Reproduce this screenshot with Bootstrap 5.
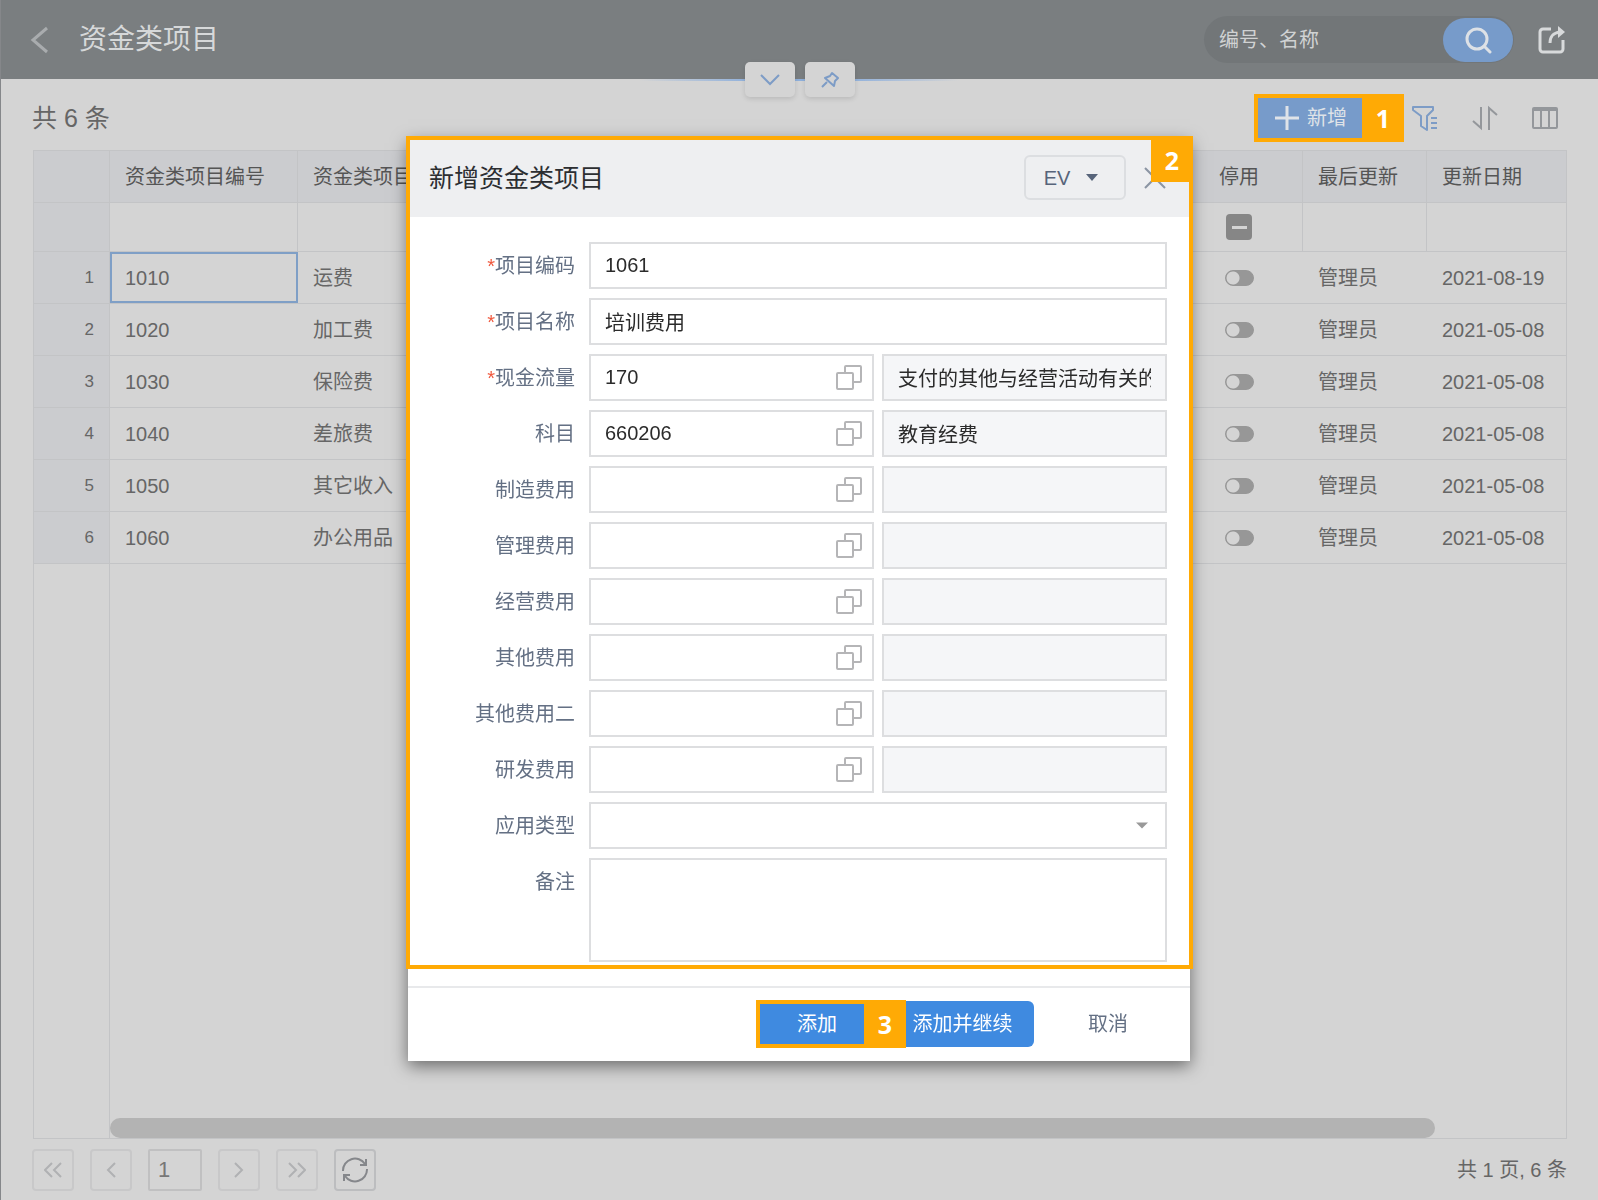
<!DOCTYPE html>
<html lang="zh-CN">
<head>
<meta charset="utf-8">
<meta name="viewport" content="width=device-width, initial-scale=1">
<title>资金类项目</title>
<link href="https://cdn.jsdelivr.net/npm/bootstrap@5.3.0/dist/css/bootstrap.min.css" rel="stylesheet">
<style>
  :root { --line: #c3c4c6; --mark: #ffaa05; --blue: #3f8ae0; --blue-dim: #779bca; }
  body { font-family: "Liberation Sans", "Noto Sans CJK SC", sans-serif; font-size: 20px; line-height: 28px; color: #666; background: #d4d4d4; }
  svg { display: block; }
  .shell { border-left: 1px solid #85878a; }
  .topbar { height: 79px; background: #7a7e80; padding: 0 32px 0 28px; color: #d6d8d9; }
  .topbar h1 { font-size: 28px; line-height: 40px; font-weight: 400; }
  .searchbox { background: #727678; border-radius: 24px; height: 47px; width: 310px; padding: 1px; }
  .searchbox input { color: #d0d2d3; font-size: 20px; padding: 0 0 0 14px; background: transparent; min-width: 0; }
  .searchbox input::placeholder { color: #d0d2d3; opacity: 1; }
  .searchbox input:focus { background: transparent; box-shadow: none; }
  .searchbox .btn { background: var(--blue-dim); width: 70px; height: 44px; border-radius: 22px; }
  .tabs-pull { top: 62px; left: 0; right: 0; gap: 10px; }
  .tabs-pull .btn { width: 50px; height: 35px; border-radius: 5px; background: #d4d4d4; color: #7d9cc6; box-shadow: 0 2px 5px rgba(0,0,0,.12); }
  .glow { top: 79px; left: 40%; right: 40%; height: 2px; background: linear-gradient(90deg, transparent, #8fb0dc 35%, #8fb0dc 65%, transparent); }
  .toolbar { height: 71px; padding: 6px 40px 0 31px; }
  .total { font-size: 25px; }
  .tool-set { gap: 34px; }
  .toolbar .tool { color: #94979b; width: 26px; height: 26px; }
  .toolbar .tool.on { color: #7d9cc6; }
  .add-btn { background: var(--blue-dim); color: #dfe3e8; height: 46px; width: 148px; padding: 0 0 0 19px; border-radius: 4px; font-size: 20px; }
  .grid-wrap { margin: 0 31px 0 32px; border: 1px solid var(--line); }
  .grid { table-layout: fixed; width: 100%; border-collapse: separate; border-spacing: 0; }
  .grid th, .grid td { height: 52px; padding: 0 15px; border-bottom: 1px solid var(--line); font-weight: 400; white-space: nowrap; overflow: hidden; }
  .grid thead th { background: #cbcccf; color: #555; border-right: 1px solid var(--line); }
  .grid .filters td { height: 49px; border-right: 1px solid var(--line); }
  .grid thead th:last-child, .grid .filters td:last-child { border-right: 0; }
  .grid .num { background: #cbcccf; font-size: 17px; text-align: right; border-right: 1px solid var(--line); }
  .grid .picked { box-shadow: inset 0 0 0 2px #7f9fc6; }
  .gutter { width: 76px; border-right: 1px solid var(--line); }
  .hbar { width: 91%; height: 20px; border-radius: 10px; background: #b3b3b3; }
  .minus { appearance: none; width: 26px; height: 26px; border-radius: 4px; background: #868686 linear-gradient(#d4d4d4, #d4d4d4) center / 15px 3px no-repeat; margin: 0; display: block; }
  .flip { appearance: none; width: 29px; height: 16px; border-radius: 8px; border: 1px solid #979797; background: radial-gradient(circle at 7px 7px, #d4d4d4 6px, #979797 7px); display: block; margin: 0; }
  .pager { padding: 10px 31px 9px 31px; gap: 16px; }
  .pager .btn, .pager input { width: 42px; height: 42px; border: 2px solid #c8c8c9; border-radius: 4px; padding: 0; color: #b0b1b3; background: transparent; }
  .pager input { width: 54px; padding: 0 8px; color: #777; border-color: #c0c0c1; border-radius: 2px; font-size: 22px; }
  .pager .refresh { color: #85878b; border-color: #bcbdbf; }

  .tag-frame { border: 4px solid var(--mark); pointer-events: none; z-index: 5; }
  .tag-no { position: absolute; background: var(--mark); color: #fff; font: 700 25px/48px "Noto Sans", "Noto Sans CJK SC", sans-serif; width: 42px; text-align: center; }
  .add-frame { inset: -1px 0 -1px -2px; border-right-width: 0; }
  .tag-side { top: -4px; right: 0; bottom: -4px; }
  .dlg-frame { inset: -2px -3px auto -2px; height: 833px; }
  .dlg-frame .tag-no { top: -4px; right: -4px; height: 46px; }

  .dlg { max-width: 782px; margin: 138px auto 0; }
  .dlg .modal-content { border: 0; border-radius: 0; box-shadow: 0 5px 16px rgba(0,0,0,.5); }
  .dlg .modal-header { height: 79px; background: #eeeff1; border: 0; border-radius: 0; padding: 0 24px 0 21px; }
  .dlg .modal-title { font-size: 25px; line-height: 36px; font-weight: 400; color: #2c2e31; }
  .dlg .head-tools { gap: 18px; }
  .ev-btn { width: 102px; height: 45px; border: 2px solid #dcdee1; border-radius: 6px; color: #57647a; font-size: 20px; padding: 0 8px 0 0; }
  .close-x { color: #8b95a3; padding: 0; width: 22px; height: 22px; border: 0; }
  .dlg .modal-body { padding: 25px 23px 24px 24px; display: grid; gap: 9px; }
  .line-item { display: grid; grid-template-columns: 143px minmax(0, 1fr); column-gap: 14px; }
  .line-item label { text-align: right; height: 47px; line-height: 49px; color: #647084; white-space: nowrap; }
  .line-item label b { color: #f0593e; font-weight: 400; }
  .box { height: 47px; width: 100%; border: 2px solid #dddee0; border-radius: 0; padding: 0 14px; font-size: 20px; color: #2b2b2b; background-color: #fff; }
  .box[readonly] { background-color: #f5f6f8; }
  .box.has-pick { padding-right: 48px; }
  select.box { appearance: none; background: #fff url("data:image/svg+xml,%3Csvg xmlns='http://www.w3.org/2000/svg' viewBox='0 0 12 6'%3E%3Cpath fill='%23999' d='M0 0h12L6 6z'/%3E%3C/svg%3E") right 17px center / 12px 7px no-repeat; }
  textarea.box { height: 104px; resize: none; display: block; }
  .pair { display: grid; grid-template-columns: 1fr 1fr; column-gap: 8px; }
  .pick { right: 11px; top: 10px; width: 28px; height: 27px; padding: 0; border: 0; color: #b5b5b7; }
  .dlg .modal-footer { height: 75px; padding: 0 24px 1px; gap: 16px; border-top: 2px solid #e8e9eb; flex-wrap: nowrap; }
  .dlg .modal-footer > * { margin: 0; }
  .act { width: 116px; height: 46px; border-radius: 6px; border: 0; font-size: 20px; padding: 0; color: #647084; }
  .act.go { background: var(--blue); color: #fff; }
  .act.wide { width: 143px; }
  .send-frame { inset: -1px -31px -1px -3px; border-right-width: 0; }
</style>
<script src="https://cdn.jsdelivr.net/npm/bootstrap@5.3.0/dist/js/bootstrap.bundle.min.js"></script>
</head>
<body>
<div class="shell min-vh-100 d-flex flex-column position-relative">
  <header class="topbar d-flex align-items-center">
    <a href="#" class="text-reset me-4" aria-label="返回"><svg width="22" height="28" viewBox="0 0 22 28" fill="none" stroke="#a9acae" stroke-width="3"><path d="M18 2 4 14l14 12"/></svg></a>
    <h1 class="m-0 ms-1">资金类项目</h1>
    <form class="searchbox d-flex align-items-center ms-auto me-4">
      <input class="form-control border-0" type="text" placeholder="编号、名称" aria-label="编号、名称">
      <button class="btn p-0 d-flex align-items-center justify-content-center flex-shrink-0" type="button" aria-label="搜索"><svg width="28" height="28" viewBox="0 0 28 28" fill="none" stroke="#dde1e6" stroke-width="3"><circle cx="13" cy="13" r="10"/><path d="m20 20 6 6" stroke-linecap="round"/></svg></button>
    </form>
    <a href="#" class="text-reset" aria-label="分享"><svg width="28" height="28" viewBox="0 0 28 28" fill="none" stroke="#d8dadb" stroke-width="3"><path d="M13 3H5a3 3 0 0 0-3 3v17a3 3 0 0 0 3 3h17a3 3 0 0 0 3-3v-9"/><path d="M12 17c0-7 3-10 10-11"/><path d="m20 0 7 6-7 6z" fill="#d8dadb" stroke="none"/></svg></a>
  </header>
  <div class="glow position-absolute"></div>
  <div class="tabs-pull position-absolute d-flex justify-content-center">
    <button class="btn border-0 p-0 d-flex align-items-center justify-content-center" type="button" aria-label="展开"><svg width="20" height="12" viewBox="0 0 20 12" fill="none" stroke="currentColor" stroke-width="2"><path d="m1 1 9 9 9-9"/></svg></button>
    <button class="btn border-0 p-0 d-flex align-items-center justify-content-center" type="button" aria-label="固定"><svg width="18" height="18" viewBox="0 0 18 18" fill="none" stroke="currentColor" stroke-width="2" stroke-linejoin="round"><path d="m11 2 6 5-3 3-1 5-9-8 5-2zM6 11l-5 5"/></svg></button>
  </div>

  <div class="toolbar d-flex align-items-center">
    <span class="total">共 6 条</span>
    <div class="ms-auto me-2 position-relative">
      <button class="btn add-btn border-0 d-flex align-items-center gap-2" type="button"><svg width="24" height="24" viewBox="0 0 24 24" stroke="currentColor" stroke-width="3"><path d="M12 0v24M0 12h24"/></svg>新增</button>
      <span class="tag-frame add-frame position-absolute"><span class="tag-no tag-side">1</span></span>
    </div>
    <div class="tool-set d-flex">
      <button class="btn tool on p-0 border-0" type="button" aria-label="筛选"><svg width="26" height="26" viewBox="0 0 26 26" fill="none" stroke="currentColor" stroke-width="2" stroke-linejoin="round"><path d="M1 2h20v3l-6 6v14l-6-4V11L1 5zM19 13h6M19 18h6M19 23h6"/></svg></button>
      <button class="btn tool p-0 border-0" type="button" aria-label="排序"><svg width="26" height="26" viewBox="0 0 26 26" fill="none" stroke="currentColor" stroke-width="2"><path d="M9 2v21l-8-7M17 25V3l8 7"/></svg></button>
      <button class="btn tool p-0 border-0" type="button" aria-label="列设置"><svg width="26" height="26" viewBox="0 0 26 26" fill="none" stroke="currentColor" stroke-width="2"><rect x="1" y="3" width="24" height="20" rx="1"/><path d="M2 5h22M9 3v20M17 3v20"/></svg></button>
    </div>
  </div>

  <main class="grid-wrap flex-grow-1 d-flex flex-column">
    <table class="grid">
      <colgroup><col style="width:76px"><col style="width:188px"><col><col style="width:127px"><col style="width:124px"><col style="width:139px"></colgroup>
      <thead>
        <tr><th></th><th>资金类项目编号</th><th>资金类项目</th><th class="text-center">停用</th><th>最后更新</th><th>更新日期</th></tr>
      </thead>
      <tbody>
        <tr class="filters"><td class="num"></td><td></td><td></td><td><input type="checkbox" class="minus mx-auto" aria-label="停用筛选"></td><td></td><td></td></tr>
        <tr><td class="num">1</td><td class="picked">1010</td><td>运费</td><td><input type="checkbox" class="flip mx-auto" aria-label="停用 1010"></td><td>管理员</td><td>2021-08-19</td></tr>
        <tr><td class="num">2</td><td>1020</td><td>加工费</td><td><input type="checkbox" class="flip mx-auto" aria-label="停用 1020"></td><td>管理员</td><td>2021-05-08</td></tr>
        <tr><td class="num">3</td><td>1030</td><td>保险费</td><td><input type="checkbox" class="flip mx-auto" aria-label="停用 1030"></td><td>管理员</td><td>2021-05-08</td></tr>
        <tr><td class="num">4</td><td>1040</td><td>差旅费</td><td><input type="checkbox" class="flip mx-auto" aria-label="停用 1040"></td><td>管理员</td><td>2021-05-08</td></tr>
        <tr><td class="num">5</td><td>1050</td><td>其它收入</td><td><input type="checkbox" class="flip mx-auto" aria-label="停用 1050"></td><td>管理员</td><td>2021-05-08</td></tr>
        <tr><td class="num">6</td><td>1060</td><td>办公用品</td><td><input type="checkbox" class="flip mx-auto" aria-label="停用 1060"></td><td>管理员</td><td>2021-05-08</td></tr>
      </tbody>
    </table>
    <div class="flex-grow-1 d-flex">
      <div class="gutter flex-shrink-0"></div>
      <div class="flex-grow-1 d-flex align-items-end"><div class="hbar"></div></div>
    </div>
  </main>

  <footer class="pager d-flex align-items-center">
    <button class="btn d-flex align-items-center justify-content-center" type="button" aria-label="首页"><svg width="18" height="16" viewBox="0 0 18 16" fill="none" stroke="currentColor" stroke-width="2"><path d="M8 1 1 8l7 7M17 1l-7 7 7 7"/></svg></button>
    <button class="btn d-flex align-items-center justify-content-center" type="button" aria-label="上一页"><svg width="10" height="16" viewBox="0 0 10 16" fill="none" stroke="currentColor" stroke-width="2"><path d="M9 1 2 8l7 7"/></svg></button>
    <input type="text" value="1" aria-label="页码">
    <button class="btn d-flex align-items-center justify-content-center" type="button" aria-label="下一页"><svg width="10" height="16" viewBox="0 0 10 16" fill="none" stroke="currentColor" stroke-width="2"><path d="m1 1 7 7-7 7"/></svg></button>
    <button class="btn d-flex align-items-center justify-content-center" type="button" aria-label="末页"><svg width="18" height="16" viewBox="0 0 18 16" fill="none" stroke="currentColor" stroke-width="2"><path d="m1 1 7 7-7 7M10 1l7 7-7 7"/></svg></button>
    <button class="btn refresh d-flex align-items-center justify-content-center" type="button" aria-label="刷新"><svg width="28" height="26" viewBox="0 0 28 26" fill="none" stroke="currentColor" stroke-width="2"><path d="M2 14A12 12 0 0 1 24 7M26 12A12 12 0 0 1 4 19"/><path d="M25 2v6h-6M3 24v-6h6"/></svg></button>
    <span class="ms-auto">共 1 页, 6 条</span>
  </footer>
</div>

<div class="modal d-block" tabindex="-1" role="dialog" aria-labelledby="dlgTitle">
  <div class="modal-dialog dlg">
    <div class="modal-content">
      <span class="tag-frame dlg-frame position-absolute"><span class="tag-no">2</span></span>
      <div class="modal-header">
        <h2 class="modal-title" id="dlgTitle">新增资金类项目</h2>
        <div class="head-tools d-flex align-items-center">
          <button class="btn ev-btn d-flex align-items-center justify-content-center gap-3" type="button">EV<svg width="12" height="7" viewBox="0 0 12 7"><path d="M0 0h12L6 7z" fill="#57647a"/></svg></button>
          <button class="btn close-x" type="button" aria-label="关闭"><svg width="22" height="22" viewBox="0 0 22 22" stroke="currentColor" stroke-width="2"><path d="m1 1 20 20M21 1 1 21"/></svg></button>
        </div>
      </div>
      <form class="modal-body" id="rows">
        <div class="line-item"><label for="f1"><b>*</b>项目编码</label><input class="box" id="f1" value="1061"></div>
        <div class="line-item"><label for="f2"><b>*</b>项目名称</label><input class="box" id="f2" value="培训费用"></div>
        <div class="line-item"><label for="f3"><b>*</b>现金流量</label><div class="pair"><div class="position-relative"><input class="box has-pick" id="f3" value="170"><button class="btn pick position-absolute" type="button" aria-label="选择"><svg width="28" height="27" viewBox="0 0 28 27" fill="none" stroke="currentColor" stroke-width="2"><rect x="2" y="9" width="16" height="16" rx="1"/><path d="M10 9V3a1 1 0 0 1 1-1h14a1 1 0 0 1 1 1v14a1 1 0 0 1-1 1h-7"/></svg></button></div><input class="box" readonly aria-label="现金流量名称" value="支付的其他与经营活动有关的现金"></div></div>
        <div class="line-item"><label for="f4">科目</label><div class="pair"><div class="position-relative"><input class="box has-pick" id="f4" value="660206"><button class="btn pick position-absolute" type="button" aria-label="选择"><svg width="28" height="27" viewBox="0 0 28 27" fill="none" stroke="currentColor" stroke-width="2"><rect x="2" y="9" width="16" height="16" rx="1"/><path d="M10 9V3a1 1 0 0 1 1-1h14a1 1 0 0 1 1 1v14a1 1 0 0 1-1 1h-7"/></svg></button></div><input class="box" readonly aria-label="科目名称" value="教育经费"></div></div>
        <div class="line-item"><label for="f5">制造费用</label><div class="pair"><div class="position-relative"><input class="box has-pick" id="f5"><button class="btn pick position-absolute" type="button" aria-label="选择"><svg width="28" height="27" viewBox="0 0 28 27" fill="none" stroke="currentColor" stroke-width="2"><rect x="2" y="9" width="16" height="16" rx="1"/><path d="M10 9V3a1 1 0 0 1 1-1h14a1 1 0 0 1 1 1v14a1 1 0 0 1-1 1h-7"/></svg></button></div><input class="box" readonly aria-label="制造费用名称"></div></div>
        <div class="line-item"><label for="f6">管理费用</label><div class="pair"><div class="position-relative"><input class="box has-pick" id="f6"><button class="btn pick position-absolute" type="button" aria-label="选择"><svg width="28" height="27" viewBox="0 0 28 27" fill="none" stroke="currentColor" stroke-width="2"><rect x="2" y="9" width="16" height="16" rx="1"/><path d="M10 9V3a1 1 0 0 1 1-1h14a1 1 0 0 1 1 1v14a1 1 0 0 1-1 1h-7"/></svg></button></div><input class="box" readonly aria-label="管理费用名称"></div></div>
        <div class="line-item"><label for="f7">经营费用</label><div class="pair"><div class="position-relative"><input class="box has-pick" id="f7"><button class="btn pick position-absolute" type="button" aria-label="选择"><svg width="28" height="27" viewBox="0 0 28 27" fill="none" stroke="currentColor" stroke-width="2"><rect x="2" y="9" width="16" height="16" rx="1"/><path d="M10 9V3a1 1 0 0 1 1-1h14a1 1 0 0 1 1 1v14a1 1 0 0 1-1 1h-7"/></svg></button></div><input class="box" readonly aria-label="经营费用名称"></div></div>
        <div class="line-item"><label for="f8">其他费用</label><div class="pair"><div class="position-relative"><input class="box has-pick" id="f8"><button class="btn pick position-absolute" type="button" aria-label="选择"><svg width="28" height="27" viewBox="0 0 28 27" fill="none" stroke="currentColor" stroke-width="2"><rect x="2" y="9" width="16" height="16" rx="1"/><path d="M10 9V3a1 1 0 0 1 1-1h14a1 1 0 0 1 1 1v14a1 1 0 0 1-1 1h-7"/></svg></button></div><input class="box" readonly aria-label="其他费用名称"></div></div>
        <div class="line-item"><label for="f9">其他费用二</label><div class="pair"><div class="position-relative"><input class="box has-pick" id="f9"><button class="btn pick position-absolute" type="button" aria-label="选择"><svg width="28" height="27" viewBox="0 0 28 27" fill="none" stroke="currentColor" stroke-width="2"><rect x="2" y="9" width="16" height="16" rx="1"/><path d="M10 9V3a1 1 0 0 1 1-1h14a1 1 0 0 1 1 1v14a1 1 0 0 1-1 1h-7"/></svg></button></div><input class="box" readonly aria-label="其他费用二名称"></div></div>
        <div class="line-item"><label for="f10">研发费用</label><div class="pair"><div class="position-relative"><input class="box has-pick" id="f10"><button class="btn pick position-absolute" type="button" aria-label="选择"><svg width="28" height="27" viewBox="0 0 28 27" fill="none" stroke="currentColor" stroke-width="2"><rect x="2" y="9" width="16" height="16" rx="1"/><path d="M10 9V3a1 1 0 0 1 1-1h14a1 1 0 0 1 1 1v14a1 1 0 0 1-1 1h-7"/></svg></button></div><input class="box" readonly aria-label="研发费用名称"></div></div>
        <div class="line-item"><label for="f11">应用类型</label><select class="box" id="f11"><option value=""></option></select></div>
        <div class="line-item"><label for="f12">备注</label><textarea class="box" id="f12"></textarea></div>
      </form>
      <div class="modal-footer">
        <div class="position-relative">
          <button class="btn act go" type="button">添加</button>
          <span class="tag-frame send-frame position-absolute"><span class="tag-no tag-side">3</span></span>
        </div>
        <button class="btn act go wide" type="button">添加并继续</button>
        <button class="btn act" type="button">取消</button>
      </div>
    </div>
  </div>
</div>
</body>
</html>
